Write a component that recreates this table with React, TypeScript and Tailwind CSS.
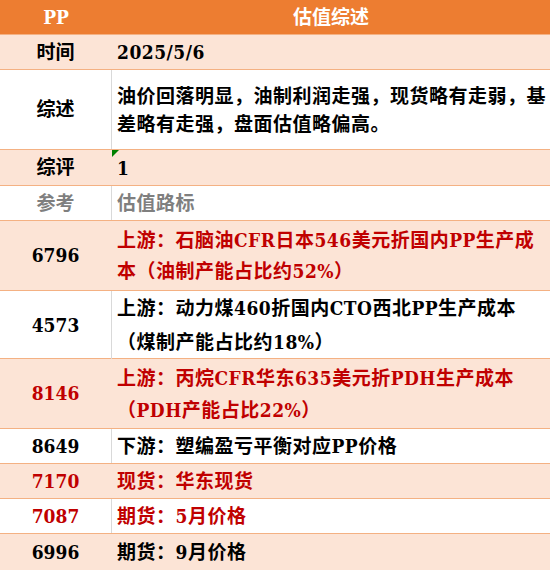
import React from "react";

const FONT = {
  fontFamily:
    '"DejaVu Serif Condensed", "Noto Sans CJK SC", "Noto Serif", serif',
};

type Row = {
  label: string;
  lines: string[];
  h: string;
  peach: boolean;
  labelColor: string;
  textColor: string;
  lh: string;
  triangle?: boolean;
};

const rows: Row[] = [
  { label: "时间", lines: ["2025/5/6"], h: "h-[35px]", peach: true, labelColor: "text-black", textColor: "text-black", lh: "leading-[28px]" },
  { label: "综述", lines: ["油价回落明显，油制利润走强，现货略有走弱，基", "差略有走强，盘面估值略偏高。"], h: "h-[80px]", peach: false, labelColor: "text-black", textColor: "text-black", lh: "leading-[28px]" },
  { label: "综评", lines: ["1"], h: "h-[36px]", peach: true, labelColor: "text-black", textColor: "text-black", lh: "leading-[28px]", triangle: true },
  { label: "参考", lines: ["估值路标"], h: "h-[35px]", peach: false, labelColor: "text-[#7f7f7f]", textColor: "text-[#7f7f7f]", lh: "leading-[28px]" },
  { label: "6796", lines: ["上游：石脑油CFR日本546美元折国内PP生产成", "本（油制产能占比约52%）"], h: "h-[70px]", peach: true, labelColor: "text-black", textColor: "text-[#c00000]", lh: "leading-[31px]" },
  { label: "4573", lines: ["上游：动力煤460折国内CTO西北PP生产成本", "（煤制产能占比约18%）"], h: "h-[68px]", peach: false, labelColor: "text-black", textColor: "text-black", lh: "leading-[34px]" },
  { label: "8146", lines: ["上游：丙烷CFR华东635美元折PDH生产成本", "（PDH产能占比22%）"], h: "h-[70px]", peach: true, labelColor: "text-[#c00000]", textColor: "text-[#c00000]", lh: "leading-[32px]" },
  { label: "8649", lines: ["下游：塑编盈亏平衡对应PP价格"], h: "h-[35px]", peach: false, labelColor: "text-black", textColor: "text-black", lh: "leading-[28px]" },
  { label: "7170", lines: ["现货：华东现货"], h: "h-[35px]", peach: true, labelColor: "text-[#c00000]", textColor: "text-[#c00000]", lh: "leading-[28px]" },
  { label: "7087", lines: ["期货：5月价格"], h: "h-[35px]", peach: false, labelColor: "text-[#c00000]", textColor: "text-[#c00000]", lh: "leading-[28px]" },
  { label: "6996", lines: ["期货：9月价格"], h: "h-[37px]", peach: true, labelColor: "text-black", textColor: "text-black", lh: "leading-[28px]" },
];

export default function App() {
  return (
    <div className="w-[550px] h-[570px] overflow-hidden bg-white font-bold text-[19px]" style={FONT}>
      <div className="grid grid-cols-[112px_1fr] h-[34px] bg-[#ed7d31] text-white items-center">
        <div className="text-center">PP</div>
        <div className="text-center">估值综述</div>
      </div>
      {rows.map((r, i) => (
        <div
          key={i}
          className={`grid grid-cols-[112px_1fr] border-t border-[#f4b183] ${r.h} ${r.peach ? "bg-[#fce4d6]" : "bg-white"}`}
        >
          <div
            className={`flex items-center justify-center border-r ${r.peach ? "border-transparent" : "border-[#d9d9d9]"} ${r.labelColor}`}
          >
            {r.label}
          </div>
          <div className={`relative flex flex-col justify-center pl-[5px] tracking-[0.5px] ${r.textColor} ${r.lh}`}>
            {r.triangle && (
              <div className="absolute left-0 top-0 w-0 h-0 border-t-[7px] border-r-[7px] border-t-[#008000] border-r-transparent" />
            )}
            {r.lines.map((l, j) => (
              <div key={j} className="whitespace-nowrap">
                {l}
              </div>
            ))}
          </div>
        </div>
      ))}
    </div>
  );
}
